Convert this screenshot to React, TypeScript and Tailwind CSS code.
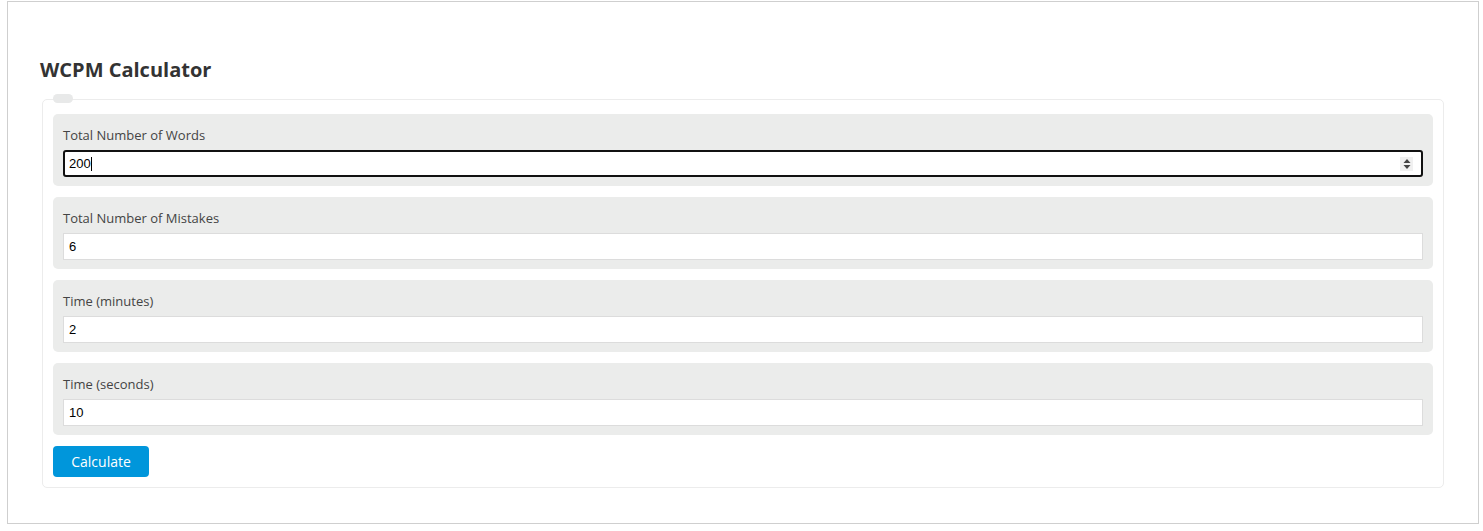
import React from 'react';

const fields = [
  { label: 'Total Number of Words', value: '200', focused: true },
  { label: 'Total Number of Mistakes', value: '6' },
  { label: 'Time (minutes)', value: '2' },
  { label: 'Time (seconds)', value: '10' },
];

const Spinner = () => (
  <svg width="8" height="12" viewBox="0 0 8 12" className="text-[#444]">
    <path d="M4 1 L7.5 5 H0.5 Z" fill="currentColor" />
    <path d="M4 11 L7.5 7 H0.5 Z" fill="currentColor" />
  </svg>
);

const App = () => {
  return (
    <div className="bg-white min-h-[531px] pt-px pl-[7px] pr-[4px] pb-[7px] font-['Open_Sans','Liberation_Sans',sans-serif]">
      <div className="border border-[#cfcfcf] h-[523px] px-[34px] pt-[54px]">
        <h2 className="text-[20px] leading-[28px] font-bold text-[#333] -ml-[2px] mb-[15px]">WCPM Calculator</h2>

        {/* FORM */}
        <div className="relative border border-[#ececec] rounded-[5px] px-[10px] pt-[14px] pb-[10px]">
          <span className="absolute left-[10px] -top-[6px] w-[20px] h-[9px] rounded-full bg-[#e8e9e9]" />
          <div className="flex flex-col gap-[11px]">
            {fields.map((f) => (
              <div key={f.label} className="bg-[#ebeceb] rounded-[5px] px-[10px] pt-[12px] pb-[9px]">
                <label className="block text-[13px] leading-[18px] text-[#444] mb-[6px]">{f.label}</label>
                {f.focused ? (
                  <div className="relative h-[27px] bg-white border-2 border-[#111] rounded-[3px] flex items-center pl-[4px] pr-[8px]">
                    <span className="text-[13px] text-black font-['Liberation_Sans',Arial,sans-serif]">{f.value}</span>
                    <span className="w-px h-[14px] bg-black" />
                    <span className="ml-auto flex items-center justify-center w-[13px] h-[14px] bg-[#f0f0f0]">
                      <Spinner />
                    </span>
                  </div>
                ) : (
                  <input
                    readOnly
                    value={f.value}
                    className="block w-full h-[27px] bg-white border border-[#dcdcdc] px-[5px] text-[13px] text-black font-['Liberation_Sans',Arial,sans-serif] outline-none"
                  />
                )}
              </div>
            ))}
          </div>
          <button className="mt-[11px] w-[96px] h-[31px] rounded-[4px] bg-[#0096db] text-white text-[14px]">
            Calculate
          </button>
        </div>
      </div>
    </div>
  );
};

export default App;
